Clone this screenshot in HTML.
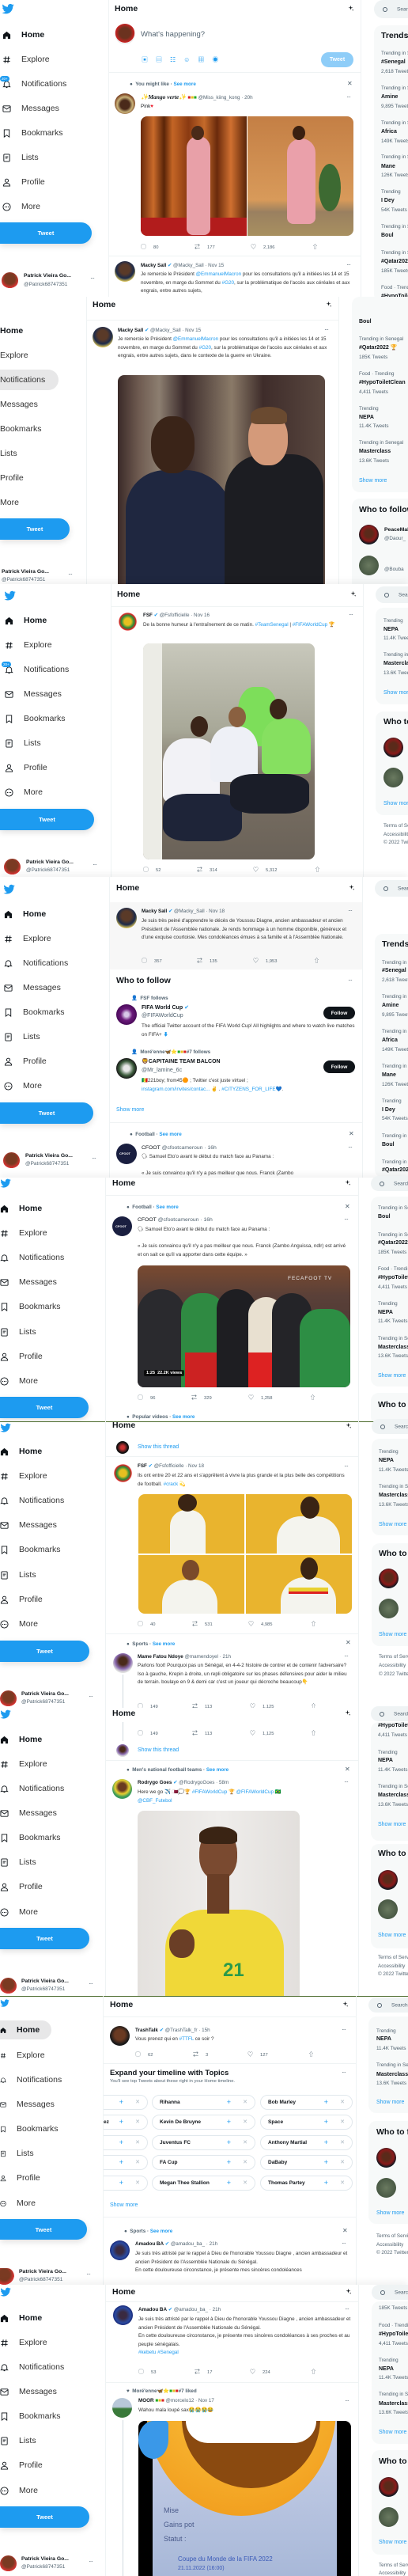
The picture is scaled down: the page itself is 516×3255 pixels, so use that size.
<!DOCTYPE html>
<html><head><meta charset="utf-8"><style>
*{margin:0;padding:0;box-sizing:border-box}
html,body{width:516px;height:3255px;overflow:hidden;background:#fff;font-family:"Liberation Sans","Noto Sans CJK JP",sans-serif;color:#0f1419}
#w{position:relative;width:516px;height:3255px;overflow:hidden}
.a{position:absolute;white-space:nowrap}
.ni{position:absolute;height:14px;display:flex;align-items:center;font-size:10.5px;color:#333;white-space:nowrap}
.ni svg{width:11px;height:11px;margin-right:13px;flex:none}
.ni.on{font-weight:700;color:#0f1419}
.hd{font-size:10.5px;font-weight:700;line-height:12px}
.s{font-size:6.3px;line-height:8px}
.t{font-size:6.3px;line-height:10.6px;white-space:normal}
.g{color:#536471}.bl{color:#1d9bf0}.b{font-weight:700}
.tb{position:absolute;background:#1d9bf0;color:#fff;font-weight:700;font-size:7.5px;border-radius:0 14px 14px 0;display:flex;align-items:center;justify-content:center;box-shadow:0 3px 8px rgba(0,0,0,.12)}
.av{position:absolute;border-radius:50%;overflow:hidden}
.vl{position:absolute;width:1px;background:#eff3f4}
.hl{position:absolute;height:1px;background:#eff3f4}
.rc{position:absolute;overflow:hidden}
.box{position:absolute;background:#f7f9f9;border-radius:10px 0 0 10px}
.sp{position:absolute;background:#eff3f4;border-radius:12px 0 0 12px}
.sp span{position:absolute;left:29px;top:50%;transform:translateY(-50%);font-size:6.5px;color:#536471;white-space:nowrap}
.sp i{position:absolute;left:11px;top:50%;margin-top:-3px;width:6px;height:6px;border:1px solid #536471;border-radius:50%}
.act{position:absolute;font-size:5.8px;color:#536471;white-space:nowrap}
.act b{font-weight:400;display:inline-block;width:16px;font-size:7px}
.img{position:absolute;overflow:hidden;border-radius:8px}
.chip{position:absolute;height:19px;border:1px solid #e1e8ed;border-radius:10px;font-size:6.5px;font-weight:700;line-height:17px;padding-left:9px;white-space:nowrap;overflow:hidden}
.chip .p{position:absolute;right:30px;color:#1d9bf0;font-size:9px;font-weight:400}
.chip .x{position:absolute;right:9px;color:#aab8c2;font-size:7px;font-weight:400}
.fol{position:absolute;background:#0f1419;color:#fff;font-weight:700;font-size:6.5px;border-radius:9px;width:40px;height:16px;display:flex;align-items:center;justify-content:center}
.dots{position:absolute;font-size:8px;color:#536471;letter-spacing:-1px}
</style></head><body><div id="w">
<svg width="0" height="0" style="position:absolute">
<symbol id="bird" viewBox="0 0 24 24"><path fill="#1d9bf0" d="M23.6 5.2c-.9.4-1.8.6-2.7.7 1-.6 1.7-1.5 2.1-2.6-.9.6-2 .9-3 1.1A4.7 4.7 0 0 0 12 8.7 13.4 13.4 0 0 1 2.3 3.8a4.7 4.7 0 0 0 1.5 6.3c-.8 0-1.500-.2-2.1-.6 0 2.3 1.6 4.2 3.8 4.6-.7.2-1.4.2-2.1.1.6 1.9 2.4 3.3 4.4 3.3A9.5 9.5 0 0 1 .7 19.5 13.4 13.4 0 0 0 7.9 21.6c8.7 0 13.4-7.2 13.4-13.4v-.6c.9-.7 1.7-1.5 2.3-2.4z"/></symbol>
<symbol id="ih" viewBox="0 0 24 24"><path fill="#0f1419" d="M12 2L2 10v12h7v-6h6v6h7V10z"/></symbol>
<symbol id="ix" viewBox="0 0 24 24"><path fill="none" stroke="#0f1419" stroke-width="2.2" d="M9 3L7 21M17 3l-2 18M3 8h18M3 16h18"/></symbol>
<symbol id="in" viewBox="0 0 24 24"><path fill="none" stroke="#0f1419" stroke-width="2" d="M5 17v-6a7 7 0 0 1 14 0v6l2 2H3zM10 21h4"/></symbol>
<symbol id="im" viewBox="0 0 24 24"><g fill="none" stroke="#0f1419" stroke-width="2"><rect x="2" y="4" width="20" height="16" rx="2"/><path d="M2 6l10 7 10-7"/></g></symbol>
<symbol id="ib" viewBox="0 0 24 24"><path fill="none" stroke="#0f1419" stroke-width="2" d="M5 2h14v20l-7-5-7 5z"/></symbol>
<symbol id="il" viewBox="0 0 24 24"><g fill="none" stroke="#0f1419" stroke-width="2"><rect x="4" y="2" width="16" height="20" rx="2"/><path d="M8 9h8M8 13h6"/></g></symbol>
<symbol id="ip" viewBox="0 0 24 24"><g fill="none" stroke="#0f1419" stroke-width="2"><circle cx="12" cy="7" r="4.5"/><path d="M3 22c0-5 4-8 9-8s9 3 9 8z"/></g></symbol>
<symbol id="io" viewBox="0 0 24 24"><g fill="none" stroke="#0f1419" stroke-width="2"><circle cx="12" cy="12" r="10"/></g><g fill="#0f1419"><circle cx="7.5" cy="12" r="1.4"/><circle cx="12" cy="12" r="1.4"/><circle cx="16.5" cy="12" r="1.4"/></g></symbol>
<symbol id="spk" viewBox="0 0 24 24"><path fill="#0f1419" d="M12 2l1.5 6.5L20 10l-6.5 1.5L12 18l-1.5-6.5L4 10l6.5-1.5zM19 15l.8 2.2L22 18l-2.2.8L19 21l-.8-2.2L16 18l2.2-.8z"/></symbol>
</svg>

<!-- ============ SECTION 1 (0-375) ============ -->
<svg class="a" style="left:2px;top:3px;width:16px;height:16px"><use href="#bird"/></svg>
<div class="ni on" style="left:3px;top:37px"><svg><use href="#ih"/></svg>Home</div>
<div class="ni" style="left:3px;top:68px"><svg><use href="#ix"/></svg>Explore</div>
<div class="ni" style="left:3px;top:99px"><svg><use href="#in"/></svg>Notifications</div>
<div class="a" style="left:0;top:96px;background:#1d9bf0;color:#fff;font-size:4.5px;border-radius:4px;padding:1px 2px">20+</div>
<div class="ni" style="left:3px;top:130px"><svg><use href="#im"/></svg>Messages</div>
<div class="ni" style="left:3px;top:161px"><svg><use href="#ib"/></svg>Bookmarks</div>
<div class="ni" style="left:3px;top:192px"><svg><use href="#il"/></svg>Lists</div>
<div class="ni" style="left:3px;top:223px"><svg><use href="#ip"/></svg>Profile</div>
<div class="ni" style="left:3px;top:254px"><svg><use href="#io"/></svg>More</div>
<div class="tb" style="left:0;top:281px;width:116px;height:27px">Tweet</div>
<div class="av" style="left:2px;top:344px;width:21px;height:21px;background:radial-gradient(circle at 50% 40%,#7a3a22 40%,#d33 70%,#fff 72%)"></div>
<div class="a s b" style="left:30px;top:345px;font-size:6.8px">Patrick Vieira Go...</div>
<div class="a s g" style="left:30px;top:356px;font-size:6.5px">@Patrick68747351</div>
<div class="dots" style="left:114px;top:347px">···</div>

<div class="vl" style="left:137px;top:0;height:375px"></div><div class="vl" style="left:456px;top:0;height:375px"></div>
<div class="a hd" style="left:145px;top:5px">Home</div>
<svg class="a" style="left:439px;top:6px;width:9px;height:9px"><use href="#spk"/></svg>
<div class="av" style="left:145px;top:30px;width:26px;height:26px;background:radial-gradient(circle at 50% 45%,#6b321f 35%,#c22 62%,#eee 64%)"></div>
<div class="a g" style="left:178px;top:38px;font-size:9.5px">What's happening?</div>
<div class="a bl" style="left:179px;top:70px;font-size:8px;letter-spacing:10px">▣▤☷☺▦◉</div>
<div class="tb" style="left:406px;top:66px;width:41px;height:19px;background:#8ecdf8;box-shadow:none;font-size:7px;border-radius:10px">Tweet</div>
<div class="hl" style="left:137px;top:91px;width:320px"></div>
<div class="a s b g" style="left:164px;top:103px">● &nbsp;You might like · <span class="bl">See more</span></div>
<div class="a g" style="left:439px;top:101px;font-size:8px">✕</div>
<div class="av" style="left:145px;top:118px;width:26px;height:26px;background:radial-gradient(circle at 50% 55%,#4a2a1a 30%,#c9b37a 50%,#7a4020 70%)"></div>
<div class="a s" style="left:178px;top:119px"><span class="b" style="font-style:italic;font-family:'Liberation Serif',serif;font-size:7.5px">✨Mango verte✨</span> <span style="color:#d22">■</span><span style="color:#e8c020">■</span><span style="color:#2a2">■</span> <span class="g">@Miss_kiing_kong · 20h</span></div>
<div class="dots" style="left:438px;top:118px">···</div>
<div class="a s" style="left:178px;top:131px">Pink<span style="color:#e23">♥</span></div>
<div class="img" style="left:178px;top:147px;width:269px;height:151px">
 <div class="a" style="left:0;top:0;width:134px;height:151px;background:linear-gradient(90deg,#6a2a0c 0,#c96a2a 12%,#5a2408 22%,#c46525 30%,#8a3a12 45%,#c46a2a 60%,#6a2a0c 72%,#d07030 85%,#5a2408 100%)"></div>
 <div class="a" style="left:0;top:128px;width:134px;height:23px;background:#b21c1c"></div>
 <div class="a" style="left:58px;top:25px;width:30px;height:125px;border-radius:15px 15px 8px 8px;background:#e8a0a8"></div>
 <div class="a" style="left:64px;top:12px;width:16px;height:18px;border-radius:50%;background:#4a2a18"></div>
 <div class="a" style="left:135px;top:0;width:134px;height:151px;background:linear-gradient(180deg,#c47f45,#d89a5a 70%,#9a8060 80%,#a89060)"></div>
 <div class="a" style="left:185px;top:28px;width:36px;height:108px;border-radius:18px 18px 8px 8px;background:#eaa0aa"></div>
 <div class="a" style="left:192px;top:12px;width:16px;height:18px;border-radius:50%;background:#3a2010"></div>
 <div class="a" style="left:225px;top:60px;width:28px;height:60px;border-radius:50%;background:#3d6a32"></div>
</div>
<div class="act" style="left:178px;top:307px"><b>◯</b>80</div>
<div class="act" style="left:246px;top:307px"><b>⇄</b>177</div>
<div class="act" style="left:317px;top:307px"><b>♡</b>2,186</div>
<div class="act" style="left:395px;top:307px"><b>⇧</b></div>
<div class="hl" style="left:137px;top:323px;width:320px"></div>
<div class="av" style="left:145px;top:330px;width:26px;height:26px;background:radial-gradient(circle at 50% 40%,#5a3a28 30%,#1c2a4a 55%,#d9c35a 75%)"></div>
<div class="a s" style="left:178px;top:332px"><span class="b">Macky Sall</span> <span class="bl">✔</span> <span class="g">@Macky_Sall · Nov 15</span></div>
<div class="dots" style="left:438px;top:330px">···</div>
<div class="a t" style="left:178px;top:342px;width:270px;color:#333">Je remercie le Président <span class="bl">@EmmanuelMacron</span> pour les consultations qu'il a initiées les 14 et 15 novembre, en marge du Sommet du <span class="bl">#G20</span>, sur la problématique de l'accès aux céréales et aux engrais, entre autres sujets,</div>

<div class="rc" style="left:473px;top:0;width:43px;height:375px">
<div class="sp" style="left:0;top:0;height:23px;width:43px"><i></i><span>Search Twitter</span></div>
<div class="box" style="left:0;top:32px;width:43px;height:350px"></div>
<div class="a hd" style="left:9px;top:39px">Trends for you</div>
<div class="a s g" style="left:9px;top:64px">Trending in Senegal</div><div class="a s b" style="left:9px;top:75px;font-size:7px">#Senegal</div><div class="a s g" style="left:9px;top:87px">2,618 Tweets</div>
<div class="a s g" style="left:9px;top:108px">Trending in Senegal</div><div class="a s b" style="left:9px;top:119px;font-size:7px">Amine</div><div class="a s g" style="left:9px;top:131px">9,895 Tweets</div>
<div class="a s g" style="left:9px;top:152px">Trending in Senegal</div><div class="a s b" style="left:9px;top:163px;font-size:7px">Africa</div><div class="a s g" style="left:9px;top:175px">149K Tweets</div>
<div class="a s g" style="left:9px;top:195px">Trending in Senegal</div><div class="a s b" style="left:9px;top:207px;font-size:7px">Mane</div><div class="a s g" style="left:9px;top:218px">126K Tweets</div>
<div class="a s g" style="left:9px;top:239px">Trending</div><div class="a s b" style="left:9px;top:250px;font-size:7px">I Dey</div><div class="a s g" style="left:9px;top:262px">54K Tweets</div>
<div class="a s g" style="left:9px;top:283px">Trending in Senegal</div><div class="a s b" style="left:9px;top:294px;font-size:7px">Boul</div>
<div class="a s g" style="left:9px;top:316px">Trending in Senegal</div><div class="a s b" style="left:9px;top:327px;font-size:7px">#Qatar2022</div><div class="a s g" style="left:9px;top:339px">185K Tweets</div>
<div class="a s g" style="left:9px;top:360px">Food · Trending</div><div class="a s b" style="left:9px;top:371px;font-size:7px">#HypoToiletClean</div>
</div>

<!-- ============ SECTION 2 (375-738) ============ -->
<div class="a" style="left:0;top:375px;width:516px;height:363px;background:#fff"></div>
<div class="a" style="left:0;top:467px;width:74px;height:26px;border-radius:0 13px 13px 0;background:#e7e7e8"></div>
<div class="ni on" style="left:0;top:411px">Home</div>
<div class="ni" style="left:0;top:442px">Explore</div>
<div class="ni" style="left:0;top:473px">Notifications</div>
<div class="ni" style="left:0;top:504px">Messages</div>
<div class="ni" style="left:0;top:535px">Bookmarks</div>
<div class="ni" style="left:0;top:566px">Lists</div>
<div class="ni" style="left:0;top:597px">Profile</div>
<div class="ni" style="left:0;top:628px">More</div>
<div class="tb" style="left:0;top:655px;width:88px;height:27px">Tweet</div>
<div class="a s b" style="left:2px;top:719px;font-size:6.8px">Patrick Vieira Go...</div>
<div class="a s g" style="left:2px;top:729px;font-size:6.5px">@Patrick68747351</div>
<div class="dots" style="left:86px;top:721px">···</div>

<div class="vl" style="left:109px;top:375px;height:363px"></div><div class="vl" style="left:428px;top:375px;height:363px"></div>
<div class="a hd" style="left:117px;top:379px">Home</div>
<svg class="a" style="left:411px;top:380px;width:9px;height:9px"><use href="#spk"/></svg>
<div class="hl" style="left:109px;top:404px;width:320px"></div>
<div class="av" style="left:117px;top:413px;width:26px;height:26px;background:radial-gradient(circle at 50% 40%,#5a3a28 30%,#1c2a4a 55%,#d9c35a 75%)"></div>
<div class="a s" style="left:149px;top:414px"><span class="b">Macky Sall</span> <span class="bl">✔</span> <span class="g">@Macky_Sall · Nov 15</span></div>
<div class="dots" style="left:410px;top:412px">···</div>
<div class="a t" style="left:149px;top:424px;width:268px;color:#333">Je remercie le Président <span class="bl">@EmmanuelMacron</span> pour les consultations qu'il a initiées les 14 et 15 novembre, en marge du Sommet du <span class="bl">#G20</span>, sur la problématique de l'accès aux céréales et aux engrais, entre autres sujets, dans le contexte de la guerre en Ukraine.</div>
<div class="img" style="left:149px;top:474px;width:262px;height:264px;border-radius:8px 8px 0 0;background:linear-gradient(90deg,#3a2a28 0,#6e5a50 10%,#8c7e70 20%,#3a2a2a 32%,#8a7a68 55%,#3e2c2a 70%,#5a4840 100%)">
 <div class="a" style="left:10px;top:120px;width:135px;height:150px;border-radius:50px 60px 0 0;background:#1f2740"></div>
 <div class="a" style="left:42px;top:52px;width:55px;height:72px;border-radius:45%;background:#3a2418"></div>
 <div class="a" style="left:135px;top:100px;width:125px;height:170px;border-radius:50px 40px 0 0;background:#1c1d22"></div>
 <div class="a" style="left:165px;top:48px;width:50px;height:66px;border-radius:45%;background:#d49a7a"></div>
 <div class="a" style="left:168px;top:40px;width:46px;height:22px;border-radius:50% 50% 20% 20%;background:#6a4a30"></div>
</div>

<div class="rc" style="left:445px;top:375px;width:71px;height:363px">
<div class="sp" style="left:0;top:2px;height:23px;width:71px"><i></i><span>Search Twitter</span></div>
<div class="box" style="left:0;top:0;width:71px;height:247px"></div>
<div class="a s b" style="left:9px;top:28px;font-size:7px">Boul</div>
<div class="a s g" style="left:9px;top:50px">Trending in Senegal</div><div class="a s b" style="left:9px;top:61px;font-size:7px">#Qatar2022 🏆</div><div class="a s g" style="left:9px;top:73px">185K Tweets</div>
<div class="a s g" style="left:9px;top:94px">Food · Trending</div><div class="a s b" style="left:9px;top:105px;font-size:7px">#HypoToiletClean</div><div class="a s g" style="left:9px;top:117px">4,411 Tweets</div>
<div class="a s g" style="left:9px;top:138px">Trending</div><div class="a s b" style="left:9px;top:149px;font-size:7px">NEPA</div><div class="a s g" style="left:9px;top:160px">11.4K Tweets</div>
<div class="a s g" style="left:9px;top:181px">Trending in Senegal</div><div class="a s b" style="left:9px;top:192px;font-size:7px">Masterclass</div><div class="a s g" style="left:9px;top:204px">13.6K Tweets</div>
<div class="a s bl" style="left:9px;top:229px;font-size:7px">Show more</div>
<div class="box" style="left:0;top:255px;width:71px;height:120px"></div>
<div class="a hd" style="left:9px;top:263px">Who to follow</div>
<div class="av" style="left:9px;top:288px;width:25px;height:25px;background:radial-gradient(circle at 50% 45%,#5a2a1a 25%,#8a1a1a 50%,#101820 70%)"></div>
<div class="a s b" style="left:41px;top:291px;font-size:6.8px">PeaceMaker</div><div class="a s g" style="left:41px;top:302px">@Daour_</div>
<div class="av" style="left:9px;top:327px;width:25px;height:25px;background:radial-gradient(circle,#6a7a60,#3a4a38)"></div>
<div class="a s g" style="left:41px;top:341px">@Bouba</div>
</div>

<!-- ============ SECTION 3 (738-1108) ============ -->
<div class="a" style="left:0;top:738px;width:516px;height:370px;background:#fff;box-shadow:0 -4px 8px rgba(0,0,0,.05)"></div>
<svg class="a" style="left:5px;top:745px;width:15px;height:15px"><use href="#bird"/></svg>
<div class="ni on" style="left:6px;top:777px"><svg><use href="#ih"/></svg>Home</div>
<div class="ni" style="left:6px;top:808px"><svg><use href="#ix"/></svg>Explore</div>
<div class="ni" style="left:6px;top:839px"><svg><use href="#in"/></svg>Notifications</div>
<div class="a" style="left:2px;top:836px;background:#1d9bf0;color:#fff;font-size:4.5px;border-radius:4px;padding:1px 2px">20+</div>
<div class="ni" style="left:6px;top:870px"><svg><use href="#im"/></svg>Messages</div>
<div class="ni" style="left:6px;top:901px"><svg><use href="#ib"/></svg>Bookmarks</div>
<div class="ni" style="left:6px;top:932px"><svg><use href="#il"/></svg>Lists</div>
<div class="ni" style="left:6px;top:963px"><svg><use href="#ip"/></svg>Profile</div>
<div class="ni" style="left:6px;top:994px"><svg><use href="#io"/></svg>More</div>
<div class="tb" style="left:0;top:1022px;width:119px;height:27px">Tweet</div>
<div class="av" style="left:5px;top:1085px;width:21px;height:21px;background:radial-gradient(circle at 50% 40%,#7a3a22 40%,#d33 70%,#fff 72%)"></div>
<div class="a s b" style="left:33px;top:1086px;font-size:6.8px">Patrick Vieira Go...</div>
<div class="a s g" style="left:33px;top:1096px;font-size:6.5px">@Patrick68747351</div>
<div class="dots" style="left:117px;top:1088px">···</div>

<div class="vl" style="left:140px;top:738px;height:370px"></div><div class="vl" style="left:459px;top:738px;height:370px"></div>
<div class="a hd" style="left:148px;top:745px">Home</div>
<svg class="a" style="left:442px;top:746px;width:9px;height:9px"><use href="#spk"/></svg>
<div class="hl" style="left:140px;top:766px;width:320px"></div>
<div class="av" style="left:149px;top:773px;width:25px;height:25px;background:radial-gradient(circle,#e8c020 25%,#2a8a3a 45%,#d22 60%,#fff 66%)"></div>
<div class="a s" style="left:181px;top:774px"><span class="b">FSF</span> <span class="bl">✔</span> <span class="g">@Fsfofficielle · Nov 16</span></div>
<div class="dots" style="left:441px;top:772px">···</div>
<div class="a t" style="left:181px;top:785px;width:270px;color:#333">De la bonne humeur à l'entraînement de ce matin. <span class="bl">#TeamSenegal</span> | <span class="bl">#FIFAWorldCup</span> 🏆</div>
<div class="img" style="left:181px;top:813px;width:217px;height:273px;background:linear-gradient(180deg,#c8c8bc 0,#a8a898 40%,#7a7064 62%,#6a6258 100%)">
 <div class="a" style="left:0;top:0;width:24px;height:273px;background:#ecece6"></div>
 <div class="a" style="left:120px;top:55px;width:50px;height:75px;border-radius:40% 40% 10% 10%;background:#7dde5a"></div>
 <div class="a" style="left:150px;top:95px;width:62px;height:70px;border-radius:40% 40% 10% 10%;background:#86e060"></div>
 <div class="a" style="left:25px;top:120px;width:72px;height:80px;border-radius:40% 40% 10% 10%;background:#f2f2f6"></div>
 <div class="a" style="left:85px;top:105px;width:60px;height:70px;border-radius:40% 40% 10% 10%;background:#eef0f6"></div>
 <div class="a" style="left:25px;top:190px;width:100px;height:60px;border-radius:30%;background:#1e2438"></div>
 <div class="a" style="left:110px;top:165px;width:100px;height:50px;border-radius:30%;background:#1a1d28"></div>
 <div class="a" style="left:60px;top:92px;width:22px;height:26px;border-radius:50%;background:#3a2418"></div>
 <div class="a" style="left:108px;top:80px;width:22px;height:26px;border-radius:50%;background:#8a6040"></div>
 <div class="a" style="left:160px;top:70px;width:22px;height:26px;border-radius:50%;background:#3a2418"></div>
</div>
<div class="act" style="left:181px;top:1094px"><b>◯</b>52</div>
<div class="act" style="left:249px;top:1094px"><b>⇄</b>314</div>
<div class="act" style="left:320px;top:1094px"><b>♡</b>5,312</div>
<div class="act" style="left:398px;top:1094px"><b>⇧</b></div>

<div class="rc" style="left:475px;top:738px;width:41px;height:370px">
<div class="sp" style="left:0;top:3px;height:21px;width:41px"><i></i><span>Search Twitter</span></div>
<div class="box" style="left:0;top:30px;width:41px;height:122px"></div>
<div class="a s g" style="left:10px;top:43px">Trending</div><div class="a s b" style="left:10px;top:54px;font-size:7px">NEPA</div><div class="a s g" style="left:10px;top:65px">11.4K Tweets</div>
<div class="a s g" style="left:10px;top:86px">Trending in Senegal</div><div class="a s b" style="left:10px;top:97px;font-size:7px">Masterclass</div><div class="a s g" style="left:10px;top:109px">13.6K Tweets</div>
<div class="a s bl" style="left:10px;top:134px;font-size:7px">Show more</div>
<div class="box" style="left:0;top:161px;width:41px;height:131px"></div>
<div class="a hd" style="left:10px;top:168px">Who to follow</div>
<div class="av" style="left:10px;top:194px;width:25px;height:25px;background:radial-gradient(circle at 50% 45%,#5a2a1a 25%,#8a1a1a 50%,#101820 70%)"></div>
<div class="av" style="left:10px;top:232px;width:25px;height:25px;background:radial-gradient(circle,#6a7a60,#3a4a38)"></div>
<div class="a s bl" style="left:10px;top:274px;font-size:7px">Show more</div>
<div class="a s g" style="left:10px;top:302px">Terms of Service</div><div class="a s g" style="left:10px;top:313px">Accessibility</div><div class="a s g" style="left:10px;top:323px">© 2022 Twitter</div>
</div>

<!-- ============ SECTION 4 (1108-1488) ============ -->
<div class="a" style="left:0;top:1108px;width:516px;height:380px;background:#fff;box-shadow:0 -4px 8px rgba(0,0,0,.05)"></div>
<svg class="a" style="left:4px;top:1116px;width:15px;height:15px"><use href="#bird"/></svg>
<div class="ni on" style="left:5px;top:1148px"><svg><use href="#ih"/></svg>Home</div>
<div class="ni" style="left:5px;top:1179px"><svg><use href="#ix"/></svg>Explore</div>
<div class="ni" style="left:5px;top:1210px"><svg><use href="#in"/></svg>Notifications</div>
<div class="ni" style="left:5px;top:1241px"><svg><use href="#im"/></svg>Messages</div>
<div class="ni" style="left:5px;top:1272px"><svg><use href="#ib"/></svg>Bookmarks</div>
<div class="ni" style="left:5px;top:1303px"><svg><use href="#il"/></svg>Lists</div>
<div class="ni" style="left:5px;top:1334px"><svg><use href="#ip"/></svg>Profile</div>
<div class="ni" style="left:5px;top:1365px"><svg><use href="#io"/></svg>More</div>
<div class="tb" style="left:0;top:1393px;width:118px;height:27px">Tweet</div>
<div class="av" style="left:4px;top:1456px;width:21px;height:21px;background:radial-gradient(circle at 50% 40%,#7a3a22 40%,#d33 70%,#fff 72%)"></div>
<div class="a s b" style="left:32px;top:1457px;font-size:6.8px">Patrick Vieira Go...</div>
<div class="a s g" style="left:32px;top:1467px;font-size:6.5px">@Patrick68747351</div>
<div class="dots" style="left:116px;top:1459px">···</div>

<div class="vl" style="left:138px;top:1108px;height:380px"></div><div class="vl" style="left:458px;top:1108px;height:380px"></div>
<div class="a hd" style="left:147px;top:1116px">Home</div>
<svg class="a" style="left:440px;top:1117px;width:9px;height:9px"><use href="#spk"/></svg>
<div class="a" style="left:139px;top:1140px;width:319px;height:85px;background:#f7f7f7"></div>
<div class="av" style="left:147px;top:1147px;width:26px;height:26px;background:radial-gradient(circle at 50% 40%,#5a3a28 30%,#1c2a4a 55%,#d9c35a 75%)"></div>
<div class="a s" style="left:179px;top:1148px"><span class="b">Macky Sall</span> <span class="bl">✔</span> <span class="g">@Macky_Sall · Nov 18</span></div>
<div class="dots" style="left:440px;top:1146px">···</div>
<div class="a t" style="left:179px;top:1159px;width:270px;color:#333">Je suis très peiné d'apprendre le décès de Youssou Diagne, ancien ambassadeur et ancien Président de l'Assemblée nationale. Je rends hommage à un homme disponible, généreux et d'une exquise courtoisie. Mes condoléances émues à sa famille et à l'Assemblée Nationale.</div>
<div class="act" style="left:179px;top:1209px"><b>◯</b>357</div>
<div class="act" style="left:249px;top:1209px"><b>⇄</b>135</div>
<div class="act" style="left:320px;top:1209px"><b>♡</b>1,953</div>
<div class="act" style="left:397px;top:1209px"><b>⇧</b></div>
<div class="a hd" style="left:147px;top:1233px">Who to follow</div>
<div class="dots" style="left:440px;top:1234px">···</div>
<div class="a s b g" style="left:166px;top:1258px">👤 &nbsp;FSF follows</div>
<div class="av" style="left:147px;top:1269px;width:26px;height:26px;background:radial-gradient(circle,#d8c8e8 15%,#6a1a7a 40%,#4a0a5a 70%)"></div>
<div class="a s" style="left:179px;top:1270px;font-size:7px"><span class="b">FIFA World Cup</span> <span class="bl">✔</span></div>
<div class="a s g" style="left:179px;top:1280px;font-size:7px">@FIFAWorldCup</div>
<div class="a t" style="left:179px;top:1292px;width:270px;color:#333">The official Twitter account of the FIFA World Cup! All highlights and where to watch live matches on FIFA+ <span class="bl">⬇</span></div>
<div class="fol" style="left:409px;top:1272px">Follow</div>
<div class="a s b g" style="left:166px;top:1326px">👤 &nbsp;Moré'enne🦋⭐<span style="color:#2a2">■</span><span style="color:#e8c020">■</span><span style="color:#d22">■</span>#7 follows</div>
<div class="av" style="left:147px;top:1337px;width:26px;height:26px;background:radial-gradient(circle,#e8e8e8 20%,#3a5a3a 50%,#1a1a1a 70%)"></div>
<div class="a s b" style="left:179px;top:1338px;font-size:7px">🦁CAPITAINE TEAM BALCON</div>
<div class="a s g" style="left:179px;top:1349px;font-size:7px">@Mr_lamine_6c</div>
<div class="a t" style="left:179px;top:1361px;width:270px;color:#333">🇸🇳221boy; from45🟠 ; Twitter c'est juste virtuel ;<br><span class="bl">instagram.com/invites/contac...</span> ✌ . <span class="bl">#CITYZENS_FOR_LIFE</span>💙.</div>
<div class="fol" style="left:409px;top:1340px">Follow</div>
<div class="a s bl" style="left:147px;top:1399px;font-size:7px">Show more</div>
<div class="hl" style="left:138px;top:1418px;width:320px"></div>
<div class="a s b g" style="left:164px;top:1430px">● &nbsp;Football · <span class="bl">See more</span></div>
<div class="a g" style="left:441px;top:1428px;font-size:8px">✕</div>
<div class="av" style="left:147px;top:1445px;width:26px;height:26px;background:#1a1f40"></div>
<div class="a" style="left:151px;top:1455px;font-size:4px;color:#fff;font-weight:700">CFOOT</div>
<div class="a s" style="left:179px;top:1447px;font-size:6.8px">CFOOT <span class="g">@cfootcameroun · 16h</span></div>
<div class="dots" style="left:440px;top:1445px">···</div>
<div class="a t" style="left:179px;top:1457px;color:#333">🗣 Samuel Eto'o avant le début du match face au Panama :</div>
<div class="a t" style="left:179px;top:1478px;color:#333">« Je suis convaincu qu'il n'y a pas meilleur que nous. Franck (Zambo</div>

<div class="rc" style="left:474px;top:1108px;width:42px;height:380px">
<div class="sp" style="left:0;top:4px;height:21px;width:42px"><i></i><span>Search Twitter</span></div>
<div class="box" style="left:0;top:72px;width:42px;height:308px"></div>
<div class="a hd" style="left:9px;top:79px">Trends for you</div>
<div class="a s g" style="left:9px;top:105px">Trending in Senegal</div><div class="a s b" style="left:9px;top:115px;font-size:7px">#Senegal</div><div class="a s g" style="left:9px;top:127px">2,618 Tweets</div>
<div class="a s g" style="left:9px;top:148px">Trending in Senegal</div><div class="a s b" style="left:9px;top:159px;font-size:7px">Amine</div><div class="a s g" style="left:9px;top:171px">9,895 Tweets</div>
<div class="a s g" style="left:9px;top:192px">Trending in Senegal</div><div class="a s b" style="left:9px;top:203px;font-size:7px">Africa</div><div class="a s g" style="left:9px;top:215px">149K Tweets</div>
<div class="a s g" style="left:9px;top:236px">Trending in Senegal</div><div class="a s b" style="left:9px;top:247px;font-size:7px">Mane</div><div class="a s g" style="left:9px;top:259px">126K Tweets</div>
<div class="a s g" style="left:9px;top:280px">Trending</div><div class="a s b" style="left:9px;top:291px;font-size:7px">I Dey</div><div class="a s g" style="left:9px;top:302px">54K Tweets</div>
<div class="a s g" style="left:9px;top:324px">Trending in Senegal</div><div class="a s b" style="left:9px;top:335px;font-size:7px">Boul</div>
<div class="a s g" style="left:9px;top:357px">Trending in Senegal</div><div class="a s b" style="left:9px;top:367px;font-size:7px">#Qatar2022</div>
</div>

<!-- ============ SECTION 5 (1488-1796) ============ -->
<div class="a" style="left:0;top:1488px;width:516px;height:308px;background:#fff;box-shadow:0 -4px 8px rgba(0,0,0,.05)"></div>
<svg class="a" style="left:0;top:1488px;width:14px;height:14px"><use href="#bird"/></svg>
<div class="ni on" style="left:0;top:1520px"><svg><use href="#ih"/></svg>Home</div>
<div class="ni" style="left:0;top:1551px"><svg><use href="#ix"/></svg>Explore</div>
<div class="ni" style="left:0;top:1582px"><svg><use href="#in"/></svg>Notifications</div>
<div class="ni" style="left:0;top:1613px"><svg><use href="#im"/></svg>Messages</div>
<div class="ni" style="left:0;top:1644px"><svg><use href="#ib"/></svg>Bookmarks</div>
<div class="ni" style="left:0;top:1676px"><svg><use href="#il"/></svg>Lists</div>
<div class="ni" style="left:0;top:1707px"><svg><use href="#ip"/></svg>Profile</div>
<div class="ni" style="left:0;top:1738px"><svg><use href="#io"/></svg>More</div>
<div class="tb" style="left:0;top:1765px;width:112px;height:27px">Tweet</div>

<div class="vl" style="left:133px;top:1488px;height:308px"></div><div class="vl" style="left:453px;top:1488px;height:308px"></div>
<div class="a hd" style="left:142px;top:1489px">Home</div>
<svg class="a" style="left:435px;top:1490px;width:9px;height:9px"><use href="#spk"/></svg>
<div class="hl" style="left:133px;top:1510px;width:320px"></div>
<div class="a s b g" style="left:160px;top:1522px">● &nbsp;Football · <span class="bl">See more</span></div>
<div class="a g" style="left:436px;top:1520px;font-size:8px">✕</div>
<div class="av" style="left:142px;top:1537px;width:25px;height:25px;background:#1a1f40"></div>
<div class="a" style="left:146px;top:1547px;font-size:4px;color:#fff;font-weight:700">CFOOT</div>
<div class="a s" style="left:174px;top:1538px;font-size:6.8px">CFOOT <span class="g">@cfootcameroun · 16h</span></div>
<div class="dots" style="left:435px;top:1536px">···</div>
<div class="a t" style="left:174px;top:1549px;color:#333">🗣 Samuel Eto'o avant le début du match face au Panama :</div>
<div class="a t" style="left:174px;top:1570px;width:270px;color:#333">« Je suis convaincu qu'il n'y a pas meilleur que nous. Franck (Zambo Anguissa, ndlr) est arrivé et on sait ce qu'il va apporter dans cette équipe. »</div>
<div class="img" style="left:174px;top:1599px;width:269px;height:154px;background:linear-gradient(180deg,#7a4a30 0,#5a4038 25%,#3a3030 100%)">
 <div class="a" style="left:0;top:30px;width:60px;height:124px;background:#2a2a2e;border-radius:30px 30px 0 0"></div>
 <div class="a" style="left:55px;top:35px;width:55px;height:119px;background:#2f8a42;border-radius:25px 25px 0 0"></div>
 <div class="a" style="left:100px;top:30px;width:50px;height:124px;background:#1e1e22;border-radius:25px 25px 0 0"></div>
 <div class="a" style="left:140px;top:40px;width:45px;height:114px;background:#e8e0d0;border-radius:25px 25px 0 0"></div>
 <div class="a" style="left:170px;top:35px;width:50px;height:119px;background:#242428;border-radius:25px 25px 0 0"></div>
 <div class="a" style="left:205px;top:55px;width:64px;height:99px;background:#2d8e44;border-radius:25px 25px 0 0"></div>
 <div class="a" style="left:60px;top:110px;width:200px;height:44px;background:linear-gradient(90deg,#c22 0,#c22 20%,transparent 20%,transparent 40%,#d22 40%,#d22 55%,transparent 55%)"></div>
 <div class="a" style="left:8px;top:132px;background:rgba(0,0,0,.75);color:#fff;font-size:5.5px;font-weight:700;padding:1px 3px;border-radius:2px">1:25 &nbsp;22.2K views</div>
 <div class="a" style="left:190px;top:13px;color:#eee;font-size:6.5px;letter-spacing:1px">FECAFOOT TV</div>
</div>
<div class="act" style="left:174px;top:1761px"><b>◯</b>96</div>
<div class="act" style="left:242px;top:1761px"><b>⇄</b>329</div>
<div class="act" style="left:314px;top:1761px"><b>♡</b>1,258</div>
<div class="act" style="left:392px;top:1761px"><b>⇧</b></div>
<div class="a s b g" style="left:160px;top:1787px">● &nbsp;Popular videos · <span class="bl">See more</span></div>

<div class="rc" style="left:469px;top:1486px;width:47px;height:310px">
<div class="sp" style="left:0;top:0;height:19px;width:47px"><i></i><span>Search Twitter</span></div>
<div class="box" style="left:0;top:26px;width:47px;height:240px"></div>
<div class="a s g" style="left:9px;top:37px">Trending in Senegal</div><div class="a s b" style="left:9px;top:48px;font-size:7px">Boul</div>
<div class="a s g" style="left:9px;top:71px">Trending in Senegal</div><div class="a s b" style="left:9px;top:81px;font-size:7px">#Qatar2022</div><div class="a s g" style="left:9px;top:93px">185K Tweets</div>
<div class="a s g" style="left:9px;top:114px">Food · Trending</div><div class="a s b" style="left:9px;top:125px;font-size:7px">#HypoToiletClean</div><div class="a s g" style="left:9px;top:137px">4,411 Tweets</div>
<div class="a s g" style="left:9px;top:158px">Trending</div><div class="a s b" style="left:9px;top:169px;font-size:7px">NEPA</div><div class="a s g" style="left:9px;top:180px">11.4K Tweets</div>
<div class="a s g" style="left:9px;top:202px">Trending in Senegal</div><div class="a s b" style="left:9px;top:213px;font-size:7px">Masterclass</div><div class="a s g" style="left:9px;top:224px">13.6K Tweets</div>
<div class="a s bl" style="left:9px;top:249px;font-size:7px">Show more</div>
<div class="box" style="left:0;top:274px;width:47px;height:40px"></div>
<div class="a hd" style="left:9px;top:283px">Who to follow</div>
</div>

<!-- ============ SECTION 6 (1796-2158) ============ -->
<div class="a" style="left:0;top:1796px;width:516px;height:362px;background:#fff"></div>
<div class="a" style="left:0;top:1796px;width:516px;height:1px;background:#4a6a2a"></div>
<svg class="a" style="left:0;top:1797px;width:14px;height:14px"><use href="#bird"/></svg>
<div class="ni on" style="left:0;top:1827px"><svg><use href="#ih"/></svg>Home</div>
<div class="ni" style="left:0;top:1858px"><svg><use href="#ix"/></svg>Explore</div>
<div class="ni" style="left:0;top:1889px"><svg><use href="#in"/></svg>Notifications</div>
<div class="ni" style="left:0;top:1920px"><svg><use href="#im"/></svg>Messages</div>
<div class="ni" style="left:0;top:1951px"><svg><use href="#ib"/></svg>Bookmarks</div>
<div class="ni" style="left:0;top:1983px"><svg><use href="#il"/></svg>Lists</div>
<div class="ni" style="left:0;top:2014px"><svg><use href="#ip"/></svg>Profile</div>
<div class="ni" style="left:0;top:2045px"><svg><use href="#io"/></svg>More</div>
<div class="tb" style="left:0;top:2073px;width:113px;height:27px">Tweet</div>
<div class="av" style="left:0;top:2136px;width:21px;height:21px;background:radial-gradient(circle at 50% 40%,#7a3a22 40%,#d33 70%,#fff 72%)"></div>
<div class="a s b" style="left:27px;top:2137px;font-size:6.8px">Patrick Vieira Go...</div>
<div class="a s g" style="left:27px;top:2147px;font-size:6.5px">@Patrick68747351</div>
<div class="dots" style="left:112px;top:2139px">···</div>

<div class="vl" style="left:133px;top:1796px;height:362px"></div><div class="vl" style="left:453px;top:1796px;height:362px"></div>
<div class="a hd" style="left:142px;top:1795px">Home</div>
<svg class="a" style="left:436px;top:1797px;width:9px;height:9px"><use href="#spk"/></svg>
<div class="av" style="left:147px;top:1821px;width:16px;height:16px;background:radial-gradient(circle,#c33 20%,#111 60%)"></div>
<div class="a s bl" style="left:174px;top:1825px;font-size:7px">Show this thread</div>
<div class="hl" style="left:133px;top:1840px;width:320px"></div>
<div class="av" style="left:143px;top:1849px;width:25px;height:25px;background:radial-gradient(circle,#e8c020 25%,#2a8a3a 45%,#d22 60%,#fff 66%)"></div>
<div class="a s" style="left:174px;top:1849px"><span class="b">FSF</span> <span class="bl">✔</span> <span class="g">@Fsfofficielle · Nov 18</span></div>
<div class="dots" style="left:435px;top:1848px">···</div>
<div class="a t" style="left:174px;top:1860px;width:270px;color:#333">Ils ont entre 20 et 22 ans et s'apprêtent à vivre la plus grande et la plus belle des compétitions de football. <span class="bl">#crack</span> 💫</div>
<div class="img" style="left:175px;top:1888px;width:270px;height:151px;background:#fff">
 <div class="a" style="left:0;top:0;width:134px;height:75px;background:#e9b42e"></div>
 <div class="a" style="left:136px;top:0;width:134px;height:75px;background:#e9b42e"></div>
 <div class="a" style="left:0;top:77px;width:134px;height:74px;background:#e9b42e"></div>
 <div class="a" style="left:136px;top:77px;width:134px;height:74px;background:#e9b42e"></div>
 <div class="a" style="left:40px;top:20px;width:45px;height:55px;border-radius:20px 20px 0 0;background:#f4f4ee"></div>
 <div class="a" style="left:50px;top:0;width:24px;height:22px;border-radius:50%;background:#3a2414"></div>
 <div class="a" style="left:175px;top:28px;width:80px;height:47px;border-radius:30px 30px 0 0;background:#f4f4ee"></div>
 <div class="a" style="left:205px;top:3px;width:24px;height:28px;border-radius:50%;background:#3a2414"></div>
 <div class="a" style="left:30px;top:108px;width:70px;height:43px;border-radius:30px 30px 0 0;background:#f4f4ee"></div>
 <div class="a" style="left:55px;top:83px;width:22px;height:26px;border-radius:50%;background:#7a4a2a"></div>
 <div class="a" style="left:180px;top:105px;width:70px;height:46px;border-radius:30px 30px 0 0;background:#f4f4ee"></div>
 <div class="a" style="left:205px;top:80px;width:22px;height:28px;border-radius:50%;background:#3a2414"></div>
 <div class="a" style="left:190px;top:118px;width:50px;height:8px;background:#e8d030;border-bottom:3px solid #d22"></div>
</div>
<div class="act" style="left:174px;top:2047px"><b>◯</b>40</div>
<div class="act" style="left:243px;top:2047px"><b>⇄</b>531</div>
<div class="act" style="left:314px;top:2047px"><b>♡</b>4,985</div>
<div class="act" style="left:393px;top:2047px"><b>⇧</b></div>
<div class="hl" style="left:133px;top:2064px;width:320px"></div>
<div class="a s b g" style="left:160px;top:2074px">● &nbsp;Sports · <span class="bl">See more</span></div>
<div class="a g" style="left:437px;top:2071px;font-size:8px">✕</div>
<div class="av" style="left:143px;top:2089px;width:25px;height:25px;background:radial-gradient(circle at 50% 40%,#4a2a1a 25%,#8a6ab0 50%,#ddd 70%)"></div>
<div class="a" style="left:155px;top:2116px;width:1px;height:42px;background:#cfd9de"></div>
<div class="a s" style="left:174px;top:2090px"><span class="b">Mame Fatou Ndoye</span> <span class="g">@mamendoyel · 21h</span></div>
<div class="dots" style="left:435px;top:2088px">···</div>
<div class="a t" style="left:174px;top:2100px;width:272px;color:#333">Parlons foot! Pourquoi pas un Sénégal, en 4-4-2 histoire de contrer et de contenir l'adversaire? Iso à gauche, Krepin à droite, un repli obligatoire sur les phases défensives pour aider le milieu de terrain. boulaye en 9 &amp; demi car c'est un joueur qui décroche beaucoup👇</div>
<div class="act" style="left:174px;top:2151px"><b>◯</b>149</div>
<div class="act" style="left:243px;top:2151px"><b>⇄</b>113</div>
<div class="act" style="left:316px;top:2151px"><b>♡</b>1,125</div>
<div class="act" style="left:393px;top:2151px"><b>⇧</b></div>

<div class="rc" style="left:470px;top:1793px;width:46px;height:365px">
<div class="sp" style="left:0;top:0;height:19px;width:46px"><i></i><span>Search Twitter</span></div>
<div class="box" style="left:0;top:25px;width:46px;height:122px"></div>
<div class="a s g" style="left:9px;top:38px">Trending</div><div class="a s b" style="left:9px;top:49px;font-size:7px">NEPA</div><div class="a s g" style="left:9px;top:61px">11.4K Tweets</div>
<div class="a s g" style="left:9px;top:82px">Trending in Senegal</div><div class="a s b" style="left:9px;top:93px;font-size:7px">Masterclass</div><div class="a s g" style="left:9px;top:105px">13.6K Tweets</div>
<div class="a s bl" style="left:9px;top:130px;font-size:7px">Show more</div>
<div class="box" style="left:0;top:157px;width:46px;height:130px"></div>
<div class="a hd" style="left:9px;top:164px">Who to follow</div>
<div class="av" style="left:9px;top:189px;width:25px;height:25px;background:radial-gradient(circle at 50% 45%,#5a2a1a 25%,#8a1a1a 50%,#101820 70%)"></div>
<div class="av" style="left:9px;top:227px;width:25px;height:25px;background:radial-gradient(circle,#6a7a60,#3a4a38)"></div>
<div class="a s bl" style="left:9px;top:269px;font-size:7px">Show more</div>
<div class="a s g" style="left:9px;top:297px">Terms of Service</div><div class="a s g" style="left:9px;top:308px">Accessibility</div><div class="a s g" style="left:9px;top:319px">© 2022 Twitter</div>
</div>

<!-- ============ SECTION 7 (2158-2522) ============ -->
<div class="a" style="left:0;top:2158px;width:516px;height:364px;background:#fff"></div>
<svg class="a" style="left:0;top:2159px;width:14px;height:14px"><use href="#bird"/></svg>
<div class="ni on" style="left:0;top:2191px"><svg><use href="#ih"/></svg>Home</div>
<div class="ni" style="left:0;top:2222px"><svg><use href="#ix"/></svg>Explore</div>
<div class="ni" style="left:0;top:2253px"><svg><use href="#in"/></svg>Notifications</div>
<div class="ni" style="left:0;top:2284px"><svg><use href="#im"/></svg>Messages</div>
<div class="ni" style="left:0;top:2315px"><svg><use href="#ib"/></svg>Bookmarks</div>
<div class="ni" style="left:0;top:2346px"><svg><use href="#il"/></svg>Lists</div>
<div class="ni" style="left:0;top:2377px"><svg><use href="#ip"/></svg>Profile</div>
<div class="ni" style="left:0;top:2409px"><svg><use href="#io"/></svg>More</div>
<div class="tb" style="left:0;top:2436px;width:113px;height:27px">Tweet</div>
<div class="av" style="left:0;top:2499px;width:21px;height:21px;background:radial-gradient(circle at 50% 40%,#7a3a22 40%,#d33 70%,#fff 72%)"></div>
<div class="a s b" style="left:27px;top:2500px;font-size:6.8px">Patrick Vieira Go...</div>
<div class="a s g" style="left:27px;top:2510px;font-size:6.5px">@Patrick68747351</div>
<div class="dots" style="left:112px;top:2502px">···</div>

<div class="vl" style="left:133px;top:2158px;height:364px"></div><div class="vl" style="left:453px;top:2158px;height:364px"></div>
<div class="a hd" style="left:142px;top:2159px">Home</div>
<svg class="a" style="left:435px;top:2160px;width:9px;height:9px"><use href="#spk"/></svg>
<div class="a" style="left:155px;top:2176px;width:1px;height:24px;background:#cfd9de"></div>
<div class="act" style="left:174px;top:2185px"><b>◯</b>149</div>
<div class="act" style="left:243px;top:2185px"><b>⇄</b>113</div>
<div class="act" style="left:316px;top:2185px"><b>♡</b>1,125</div>
<div class="act" style="left:393px;top:2185px"><b>⇧</b></div>
<div class="av" style="left:147px;top:2204px;width:16px;height:16px;background:radial-gradient(circle at 50% 40%,#4a2a1a 25%,#8a6ab0 50%,#ddd 70%)"></div>
<div class="a s bl" style="left:174px;top:2208px;font-size:7px">Show this thread</div>
<div class="hl" style="left:133px;top:2224px;width:320px"></div>
<div class="a s b g" style="left:160px;top:2233px">● &nbsp;Men's national football teams · <span class="bl">See more</span></div>
<div class="a g" style="left:436px;top:2231px;font-size:8px">✕</div>
<div class="av" style="left:142px;top:2248px;width:25px;height:25px;background:radial-gradient(circle at 50% 40%,#6a3a20 25%,#e8d030 45%,#3a9a5a 65%)"></div>
<div class="a s" style="left:174px;top:2249px"><span class="b">Rodrygo Goes</span> <span class="bl">✔</span> <span class="g">@RodrygoGoes · 58m</span></div>
<div class="dots" style="left:435px;top:2247px">···</div>
<div class="a t" style="left:174px;top:2260px;width:272px;color:#333">Here we go ✈️ 🇶🇦💭🏆 <span class="bl">#FIFAWorldCup</span> 🏆 <span class="bl">@FIFAWorldCup</span> 🇧🇷<br><span class="bl">@CBF_Futebol</span></div>
<div class="img" style="left:174px;top:2288px;width:205px;height:234px;border-radius:8px 8px 0 0;background:linear-gradient(90deg,#e4e1de,#efedeb 50%,#e2dfdc)">
 <div class="a" style="left:35px;top:125px;width:150px;height:120px;border-radius:50px 50px 0 0;background:#f0d838"></div>
 <div class="a" style="left:78px;top:25px;width:48px;height:62px;border-radius:45%;background:#7a4a30"></div>
 <div class="a" style="left:78px;top:20px;width:48px;height:22px;border-radius:50% 50% 20% 20%;background:#3a2414"></div>
 <div class="a" style="left:88px;top:80px;width:28px;height:50px;background:#6a3e26"></div>
 <div class="a" style="left:40px;top:150px;width:32px;height:36px;border-radius:45%;background:#6a3e26"></div>
 <div class="a" style="left:108px;top:188px;color:#2a9a4a;font-size:24px;font-weight:700">21</div>
</div>

<div class="rc" style="left:469px;top:2156px;width:47px;height:366px">
<div class="sp" style="left:0;top:0;height:19px;width:47px"><i></i><span>Search Twitter</span></div>
<div class="box" style="left:0;top:20px;width:47px;height:150px"></div>
<div class="a s b" style="left:9px;top:21px;font-size:7px">#HypoToiletClean</div><div class="a s g" style="left:9px;top:33px">4,411 Tweets</div>
<div class="a s g" style="left:9px;top:55px">Trending</div><div class="a s b" style="left:9px;top:65px;font-size:7px">NEPA</div><div class="a s g" style="left:9px;top:77px">11.4K Tweets</div>
<div class="a s g" style="left:9px;top:98px">Trending in Senegal</div><div class="a s b" style="left:9px;top:109px;font-size:7px">Masterclass</div><div class="a s g" style="left:9px;top:121px">13.6K Tweets</div>
<div class="a s bl" style="left:9px;top:146px;font-size:7px">Show more</div>
<div class="box" style="left:0;top:174px;width:47px;height:132px"></div>
<div class="a hd" style="left:9px;top:180px">Who to follow</div>
<div class="av" style="left:9px;top:207px;width:25px;height:25px;background:radial-gradient(circle at 50% 45%,#5a2a1a 25%,#8a1a1a 50%,#101820 70%)"></div>
<div class="av" style="left:9px;top:244px;width:25px;height:25px;background:radial-gradient(circle,#6a7a60,#3a4a38)"></div>
<div class="a s bl" style="left:9px;top:286px;font-size:7px">Show more</div>
<div class="a s g" style="left:9px;top:314px">Terms of Service</div><div class="a s g" style="left:9px;top:325px">Accessibility</div><div class="a s g" style="left:9px;top:335px">© 2022 Twitter</div>
</div>

<!-- ============ SECTION 8 (2522-2887) ============ -->
<div class="a" style="left:0;top:2522px;width:516px;height:365px;background:#fff"></div>
<div class="a" style="left:0;top:2522px;width:516px;height:1px;background:#4a6a2a"></div>
<svg class="a" style="left:0;top:2524px;width:12px;height:14px"><use href="#bird"/></svg>
<div class="a" style="left:0;top:2553px;width:65px;height:24px;border-radius:0 12px 12px 0;background:#e7e7e8"></div>
<div class="ni on" style="left:0;top:2558px"><svg style="width:8px;margin-right:13px"><use href="#ih"/></svg>Home</div>
<div class="ni" style="left:0;top:2590px"><svg style="width:8px;margin-right:13px"><use href="#ix"/></svg>Explore</div>
<div class="ni" style="left:0;top:2621px"><svg style="width:8px;margin-right:13px"><use href="#in"/></svg>Notifications</div>
<div class="ni" style="left:0;top:2652px"><svg style="width:8px;margin-right:13px"><use href="#im"/></svg>Messages</div>
<div class="ni" style="left:0;top:2683px"><svg style="width:8px;margin-right:13px"><use href="#ib"/></svg>Bookmarks</div>
<div class="ni" style="left:0;top:2714px"><svg style="width:8px;margin-right:13px"><use href="#il"/></svg>Lists</div>
<div class="ni" style="left:0;top:2745px"><svg style="width:8px;margin-right:13px"><use href="#ip"/></svg>Profile</div>
<div class="ni" style="left:0;top:2777px"><svg style="width:8px;margin-right:13px"><use href="#io"/></svg>More</div>
<div class="tb" style="left:0;top:2804px;width:110px;height:26px">Tweet</div>
<div class="av" style="left:0;top:2866px;width:18px;height:21px;border-radius:0 50% 50% 0;background:radial-gradient(circle at 30% 40%,#7a3a22 40%,#d33 70%,#fff 72%)"></div>
<div class="a s b" style="left:24px;top:2867px;font-size:6.8px">Patrick Vieira Go...</div>
<div class="a s g" style="left:24px;top:2877px;font-size:6.5px">@Patrick68747351</div>
<div class="dots" style="left:109px;top:2869px">···</div>

<div class="vl" style="left:130px;top:2522px;height:365px"></div><div class="vl" style="left:450px;top:2522px;height:365px"></div>
<div class="a hd" style="left:139px;top:2527px">Home</div>
<svg class="a" style="left:432px;top:2528px;width:9px;height:9px"><use href="#spk"/></svg>
<div class="hl" style="left:130px;top:2548px;width:320px"></div>
<div class="av" style="left:139px;top:2560px;width:25px;height:25px;background:radial-gradient(circle at 50% 45%,#6a3a22 35%,#1a1a1a 65%)"></div>
<div class="a s" style="left:171px;top:2562px"><span class="b">TrashTalk</span> <span class="bl">✔</span> <span class="g">@TrashTalk_fr · 15h</span></div>
<div class="dots" style="left:432px;top:2560px">···</div>
<div class="a t" style="left:171px;top:2572px;color:#333">Vous prenez qui en <span class="bl">#TTFL</span> ce soir ?</div>
<div class="act" style="left:171px;top:2591px"><b>◯</b>62</div>
<div class="act" style="left:244px;top:2591px"><b>⇄</b>3</div>
<div class="act" style="left:313px;top:2591px"><b>♡</b>127</div>
<div class="act" style="left:390px;top:2591px"><b>⇧</b></div>
<div class="hl" style="left:130px;top:2607px;width:320px"></div>
<div class="a" style="left:139px;top:2614px;font-size:9.5px;font-weight:700">Expand your timeline with Topics</div>
<div class="dots" style="left:432px;top:2614px">···</div>
<div class="a s g" style="left:139px;top:2626px;font-size:5.8px">You'll see top Tweets about these right in your Home timeline.</div>
<div class="rc" style="left:131px;top:2640px;width:319px;height:135px">
<div class="chip" style="left:-11px;top:7px;width:67px"><span class="p">+</span><span class="x">✕</span></div>
<div class="chip" style="left:61px;top:7px;width:131px">Rihanna<span class="p">+</span><span class="x">✕</span></div>
<div class="chip" style="left:198px;top:7px;width:117px">Bob Marley<span class="p">+</span><span class="x">✕</span></div>
<div class="chip" style="left:-11px;top:32px;width:67px;padding-left:10px">ez<span class="p">+</span><span class="x">✕</span></div>
<div class="chip" style="left:61px;top:32px;width:131px">Kevin De Bruyne<span class="p">+</span><span class="x">✕</span></div>
<div class="chip" style="left:198px;top:32px;width:117px">Space<span class="p">+</span><span class="x">✕</span></div>
<div class="chip" style="left:-11px;top:58px;width:67px"><span class="p">+</span><span class="x">✕</span></div>
<div class="chip" style="left:61px;top:58px;width:131px">Juventus FC<span class="p">+</span><span class="x">✕</span></div>
<div class="chip" style="left:198px;top:58px;width:117px">Anthony Martial<span class="p">+</span><span class="x">✕</span></div>
<div class="chip" style="left:-11px;top:83px;width:67px"><span class="p">+</span><span class="x">✕</span></div>
<div class="chip" style="left:61px;top:83px;width:131px">FA Cup<span class="p">+</span><span class="x">✕</span></div>
<div class="chip" style="left:198px;top:83px;width:117px">DaBaby<span class="p">+</span><span class="x">✕</span></div>
<div class="chip" style="left:-11px;top:109px;width:67px"><span class="p">+</span><span class="x">✕</span></div>
<div class="chip" style="left:61px;top:109px;width:131px">Megan Thee Stallion<span class="p">+</span><span class="x">✕</span></div>
<div class="chip" style="left:198px;top:109px;width:117px">Thomas Partey<span class="p">+</span><span class="x">✕</span></div>
</div>
<div class="a s bl" style="left:139px;top:2783px;font-size:7px">Show more</div>
<div class="hl" style="left:130px;top:2801px;width:320px"></div>
<div class="a s b g" style="left:157px;top:2816px">● &nbsp;Sports · <span class="bl">See more</span></div>
<div class="a g" style="left:433px;top:2814px;font-size:8px">✕</div>
<div class="av" style="left:139px;top:2831px;width:25px;height:25px;background:radial-gradient(circle,#3a2a40 25%,#2a4aa0 55%,#1a2a7a 70%)"></div>
<div class="a s" style="left:171px;top:2832px"><span class="b">Amadou BA</span> <span class="bl">✔</span> <span class="g">@amadou_ba_ · 21h</span></div>
<div class="dots" style="left:432px;top:2830px">···</div>
<div class="a t" style="left:171px;top:2843px;width:272px;color:#333">Je suis très attristé par le rappel à Dieu de l'honorable Youssou Diagne , ancien ambassadeur et ancien Président de l'Assemblée Nationale du Sénégal.<br>En cette douloureuse circonstance, je présente mes sincères condoléances</div>

<div class="rc" style="left:466px;top:2524px;width:50px;height:363px">
<div class="sp" style="left:0;top:0;height:19px;width:50px"><i></i><span>Search Twitter</span></div>
<div class="box" style="left:0;top:24px;width:50px;height:122px"></div>
<div class="a s g" style="left:10px;top:39px">Trending</div><div class="a s b" style="left:10px;top:49px;font-size:7px">NEPA</div><div class="a s g" style="left:10px;top:61px">11.4K Tweets</div>
<div class="a s g" style="left:10px;top:82px">Trending in Senegal</div><div class="a s b" style="left:10px;top:94px;font-size:7px">Masterclass</div><div class="a s g" style="left:10px;top:105px">13.6K Tweets</div>
<div class="a s bl" style="left:10px;top:129px;font-size:7px">Show more</div>
<div class="box" style="left:0;top:156px;width:50px;height:130px"></div>
<div class="a hd" style="left:10px;top:164px">Who to follow</div>
<div class="av" style="left:10px;top:190px;width:25px;height:25px;background:radial-gradient(circle at 50% 45%,#5a2a1a 25%,#8a1a1a 50%,#101820 70%)"></div>
<div class="av" style="left:10px;top:228px;width:25px;height:25px;background:radial-gradient(circle,#6a7a60,#3a4a38)"></div>
<div class="a s bl" style="left:10px;top:269px;font-size:7px">Show more</div>
<div class="a s g" style="left:10px;top:298px">Terms of Service</div><div class="a s g" style="left:10px;top:309px">Accessibility</div><div class="a s g" style="left:10px;top:319px">© 2022 Twitter</div>
</div>

<!-- ============ SECTION 9 (2887-3255) ============ -->
<div class="a" style="left:0;top:2887px;width:516px;height:368px;background:#fff;box-shadow:0 -4px 8px rgba(0,0,0,.05)"></div>
<svg class="a" style="left:0;top:2889px;width:14px;height:14px"><use href="#bird"/></svg>
<div class="ni on" style="left:0;top:2922px"><svg><use href="#ih"/></svg>Home</div>
<div class="ni" style="left:0;top:2953px"><svg><use href="#ix"/></svg>Explore</div>
<div class="ni" style="left:0;top:2984px"><svg><use href="#in"/></svg>Notifications</div>
<div class="ni" style="left:0;top:3015px"><svg><use href="#im"/></svg>Messages</div>
<div class="ni" style="left:0;top:3046px"><svg><use href="#ib"/></svg>Bookmarks</div>
<div class="ni" style="left:0;top:3077px"><svg><use href="#il"/></svg>Lists</div>
<div class="ni" style="left:0;top:3108px"><svg><use href="#ip"/></svg>Profile</div>
<div class="ni" style="left:0;top:3140px"><svg><use href="#io"/></svg>More</div>
<div class="tb" style="left:0;top:3167px;width:113px;height:27px">Tweet</div>
<div class="av" style="left:0;top:3229px;width:21px;height:21px;background:radial-gradient(circle at 50% 40%,#7a3a22 40%,#d33 70%,#fff 72%)"></div>
<div class="a s b" style="left:27px;top:3230px;font-size:6.8px">Patrick Vieira Go...</div>
<div class="a s g" style="left:27px;top:3240px;font-size:6.5px">@Patrick68747351</div>
<div class="dots" style="left:112px;top:3232px">···</div>

<div class="vl" style="left:133px;top:2887px;height:368px"></div><div class="vl" style="left:453px;top:2887px;height:368px"></div>
<div class="a hd" style="left:142px;top:2890px">Home</div>
<svg class="a" style="left:436px;top:2891px;width:9px;height:9px"><use href="#spk"/></svg>
<div class="hl" style="left:133px;top:2908px;width:320px"></div>
<div class="av" style="left:143px;top:2913px;width:25px;height:25px;background:radial-gradient(circle,#3a2a40 25%,#2a4aa0 55%,#1a2a7a 70%)"></div>
<div class="a s" style="left:175px;top:2915px"><span class="b">Amadou BA</span> <span class="bl">✔</span> <span class="g">@amadou_ba_ · 21h</span></div>
<div class="dots" style="left:436px;top:2913px">···</div>
<div class="a t" style="left:175px;top:2926px;width:272px;color:#333">Je suis très attristé par le rappel à Dieu de l'honorable Youssou Diagne , ancien ambassadeur et ancien Président de l'Assemblée Nationale du Sénégal.<br>En cette douloureuse circonstance, je présente mes sincères condoléances à ses proches et au peuple sénégalais.<br><span class="bl">#kebetu #Senegal</span></div>
<div class="act" style="left:175px;top:2992px"><b>◯</b>53</div>
<div class="act" style="left:246px;top:2992px"><b>⇄</b>17</div>
<div class="act" style="left:316px;top:2992px"><b>♡</b>224</div>
<div class="act" style="left:393px;top:2992px"><b>⇧</b></div>
<div class="hl" style="left:133px;top:3010px;width:320px"></div>
<div class="a s b g" style="left:160px;top:3018px">♥ &nbsp;Moré'enne🦋⭐<span style="color:#2a2">■</span><span style="color:#e8c020">■</span><span style="color:#d22">■</span>#7 liked</div>
<div class="av" style="left:142px;top:3030px;width:25px;height:25px;background:linear-gradient(180deg,#b8c8d8 45%,#3a7a3a 55%)"></div>
<div class="a" style="left:155px;top:3058px;width:1px;height:197px;background:#cfd9de"></div>
<div class="a s" style="left:175px;top:3030px"><span class="b">MOOR</span> <span style="color:#2a2">■</span><span style="color:#e8c020">■</span><span style="color:#d22">■</span> <span class="g">@morcelo12 · Nov 17</span></div>
<div class="dots" style="left:436px;top:3029px">···</div>
<div class="a t" style="left:175px;top:3041px;color:#333">Wahou mala loupé sax😭😭😭😂</div>
<div class="img" style="left:175px;top:3059px;width:269px;height:196px;border-radius:8px 8px 0 0;background:#000">
 <div class="a" style="left:18px;top:0;width:233px;height:196px;background:linear-gradient(180deg,#c8d0e8,#a8b8d8)"></div>
 <div class="a" style="left:10px;top:-150px;width:240px;height:270px;border-radius:50%;background:radial-gradient(circle at 50% 40%,#fbc640,#f2a020 80%)"></div>
 <div class="a" style="left:55px;top:-10px;width:175px;height:95px;border-radius:0 0 90px 90px;background:#8a4a10"></div>
 <div class="a" style="left:60px;top:0;width:165px;height:28px;border-radius:0 0 50px 50px;background:#fff"></div>
 <div class="a" style="left:0;top:0;width:38px;height:48px;border-radius:50% 10% 50% 50%;background:#3a98e8"></div>
 <div class="a" style="left:32px;top:108px;font-size:9px;color:#4a5a8a">Mise</div>
 <div class="a" style="left:32px;top:126px;font-size:9px;color:#4a5a8a">Gains pot</div>
 <div class="a" style="left:32px;top:144px;font-size:9px;color:#4a5a8a">Statut :</div>
 <div class="a" style="left:50px;top:170px;font-size:8px;color:#3a5ab8">Coupe du Monde de la FIFA 2022</div>
 <div class="a" style="left:50px;top:183px;font-size:7px;color:#3a5ab8">21.11.2022 (16:00)</div>
</div>

<div class="rc" style="left:470px;top:2887px;width:46px;height:368px">
<div class="sp" style="left:0;top:0;height:19px;width:46px"><i></i><span>Search Twitter</span></div>
<div class="box" style="left:0;top:21px;width:46px;height:180px"></div>
<div class="a s g" style="left:9px;top:26px">185K Tweets</div>
<div class="a s g" style="left:9px;top:48px">Food · Trending</div><div class="a s b" style="left:9px;top:59px;font-size:7px">#HypoToiletClean</div><div class="a s g" style="left:9px;top:71px">4,411 Tweets</div>
<div class="a s g" style="left:9px;top:92px">Trending</div><div class="a s b" style="left:9px;top:103px;font-size:7px">NEPA</div><div class="a s g" style="left:9px;top:114px">11.4K Tweets</div>
<div class="a s g" style="left:9px;top:135px">Trending in Senegal</div><div class="a s b" style="left:9px;top:147px;font-size:7px">Masterclass</div><div class="a s g" style="left:9px;top:158px">13.6K Tweets</div>
<div class="a s bl" style="left:9px;top:183px;font-size:7px">Show more</div>
<div class="box" style="left:0;top:209px;width:46px;height:132px"></div>
<div class="a hd" style="left:9px;top:217px">Who to follow</div>
<div class="av" style="left:9px;top:243px;width:25px;height:25px;background:radial-gradient(circle at 50% 45%,#5a2a1a 25%,#8a1a1a 50%,#101820 70%)"></div>
<div class="av" style="left:9px;top:281px;width:25px;height:25px;background:radial-gradient(circle,#6a7a60,#3a4a38)"></div>
<div class="a s bl" style="left:9px;top:322px;font-size:7px">Show more</div>
<div class="a s g" style="left:9px;top:351px">Terms of Service</div><div class="a s g" style="left:9px;top:361px">Accessibility</div>
</div>
</div></body></html>
